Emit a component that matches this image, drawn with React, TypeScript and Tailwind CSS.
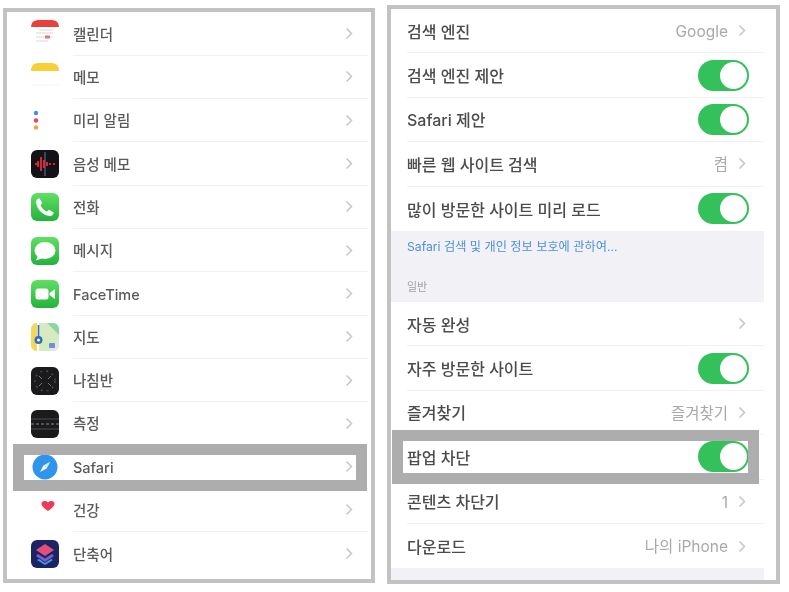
import React from "react";

const font = { fontFamily: 'Inter, "Noto Sans CJK KR", sans-serif' };

function Chevron({ className = "" }: { className?: string }) {
  return (
    <svg width="8" height="13" viewBox="0 0 8 13" fill="none" className={`blur-[0.4px] ${className}`}>
      <path d="M1.5 1.5 L6.5 6.5 L1.5 11.5" stroke="#c6c6c8" strokeWidth="1.5" />
    </svg>
  );
}

function Toggle() {
  return (
    <div className="w-[51px] h-[31px] rounded-full bg-[#34c05a] flex items-center justify-end pr-[2px] blur-[0.5px]">
      <div className="w-[27px] h-[27px] rounded-full bg-white" />
    </div>
  );
}

const Tile = ({ children, className = "" }: { children?: React.ReactNode; className?: string }) => (
  <div className={`w-[28px] h-[28px] rounded-[6px] overflow-hidden flex items-center justify-center blur-[0.6px] ${className}`}>{children}</div>
);

const icons: Record<string, React.ReactNode> = {
  calendar: (
    <Tile className="bg-white">
      <svg width="28" height="28" viewBox="0 0 28 28">
        <path d="M0 7 Q0 0 7 0 H21 Q28 0 28 7 Z" fill="#e8413c" />
        <path d="M8 10h14M5 13h17M5 17h17M5 21h12" stroke="#e6e6e6" strokeWidth="1.4" />
        <rect x="14" y="15.5" width="5" height="3" fill="#e8737a" />
      </svg>
    </Tile>
  ),
  memo: (
    <Tile className="bg-white">
      <svg width="28" height="28" viewBox="0 0 28 28">
        <path d="M0 8 Q0 0 7 0 H21 Q28 0 28 8 Z" fill="#f7d038" />
        <path d="M0 22H28" stroke="#f4f4f4" />
      </svg>
    </Tile>
  ),
  reminder: (
    <Tile className="bg-white">
      <svg width="28" height="28" viewBox="0 0 28 28">
        <circle cx="5" cy="6" r="2.2" fill="#4a90d9" />
        <circle cx="5" cy="13.5" r="2.2" fill="#e8455a" />
        <circle cx="5" cy="20.5" r="2.2" fill="#f2a33a" />
      </svg>
    </Tile>
  ),
  voice: (
    <Tile className="bg-[#141216]">
      <svg width="28" height="28" viewBox="0 0 28 28">
        <path d="M14 2V26" stroke="#5b7f9a" strokeWidth="1" />
        <path d="M4 14h3M7 11v6M10 7v14M13 10v8M16 12v4M19 13v2M22 14h2" stroke="#d3283c" strokeWidth="2" />
      </svg>
    </Tile>
  ),
  phone: (
    <Tile className="bg-gradient-to-b from-[#5fe064] to-[#21b23c]">
      <svg width="28" height="28" viewBox="0 0 24 24">
        <path d="M7.2 4.5 L9.6 8.6 L8.2 10.4 C9 12.6 11.2 15 13.6 15.8 L15.4 14.4 L19.5 16.8 C19 19 17.6 20 15.8 19.8 C10 19 5 14 4.3 8.2 C4.2 6.4 5.2 5 7.2 4.5 Z" fill="#fff" />
      </svg>
    </Tile>
  ),
  message: (
    <Tile className="bg-gradient-to-b from-[#5fe064] to-[#21b23c]">
      <svg width="28" height="28" viewBox="0 0 28 28">
        <ellipse cx="14" cy="13.5" rx="10.5" ry="8.5" fill="#fff" />
        <path d="M7 18 L5 23.5 L12 21 Z" fill="#fff" />
      </svg>
    </Tile>
  ),
  facetime: (
    <Tile className="bg-gradient-to-b from-[#5fe064] to-[#21b23c]">
      <svg width="28" height="28" viewBox="0 0 28 28">
        <rect x="4.5" y="8.5" width="13" height="11" rx="2.5" fill="#fff" />
        <path d="M18.5 13 L24 9 V19 L18.5 15 Z" fill="#fff" />
      </svg>
    </Tile>
  ),
  maps: (
    <Tile className="bg-[#d6ecc0]">
      <svg width="28" height="28" viewBox="0 0 28 28">
        <path d="M0 0H6V28H0Z" fill="#f4d85a" />
        <path d="M16 0L28 12V0Z" fill="#8fd3a4" />
        <path d="M18 28L28 16V28Z" fill="#e4e4ea" />
        <path d="M6 0 L8 0 V28 H6Z" fill="#fff" />
        <path d="M7.5 2V15" stroke="#2e6fc4" strokeWidth="1.6" />
        <circle cx="7.5" cy="17" r="4" fill="#2e6fc4" />
        <circle cx="7.5" cy="17" r="1.6" fill="#fff" />
        <rect x="18" y="20" width="6" height="5" rx="1" fill="#6d8fd6" />
      </svg>
    </Tile>
  ),
  compass: (
    <Tile className="bg-[#1a1a1c]">
      <svg width="28" height="28" viewBox="0 0 28 28">
        <circle cx="14" cy="14" r="10" fill="none" stroke="#4a4a4c" strokeWidth="1.5" strokeDasharray="2 4" />
        <path d="M8 9l3 3M20 9l-3 3M8 19l3-3M20 19l-3-3" stroke="#77777a" />
      </svg>
    </Tile>
  ),
  measure: (
    <Tile className="bg-[#1b1b1d]">
      <svg width="28" height="28" viewBox="0 0 28 28">
        <path d="M0 9H28M0 19H28" stroke="#4c4c4e" />
        <path d="M0 14H28" stroke="#8a8a8c" strokeDasharray="3 2" />
      </svg>
    </Tile>
  ),
  safari: (
    <div className="w-[28px] h-[28px] flex items-center justify-center blur-[0.6px]">
      <svg width="26" height="26" viewBox="0 0 26 26">
        <circle cx="13" cy="13" r="12.5" fill="#2f95ec" />
        <path d="M18 8 L14.5 14.5 L8 18 L11.5 11.5 Z" fill="#fff" />
        <path d="M18 8 L14.5 14.5 L11.5 11.5 Z" fill="#cfe6fb" />
      </svg>
    </div>
  ),
  health: (
    <Tile className="bg-white">
      <svg width="28" height="28" viewBox="0 0 28 28">
        <path d="M17 15 C12 11.5 10.5 9.5 10.5 7.5 C10.5 5 14.5 4 17 6.6 C19.5 4 23.5 5 23.5 7.5 C23.5 9.5 22 11.5 17 15 Z" fill="#ec3b54" />
      </svg>
    </Tile>
  ),
  shortcuts: (
    <Tile className="bg-[#1d2463]">
      <svg width="28" height="28" viewBox="0 0 28 28">
        <path d="M14 4 L23 10 L14 16 L5 10 Z" fill="#e24f7a" />
        <path d="M7 14 L14 18.5 L21 14 L23 16 L14 22 L5 16 Z" fill="#7b5cd6" />
        <path d="M8 19 L14 23 L20 19 L22 20 L14 25 L6 20 Z" fill="#3fa4d8" />
      </svg>
    </Tile>
  ),
};

const leftRows: [string, string][] = [
  ["calendar", "캘린더"],
  ["memo", "메모"],
  ["reminder", "미리 알림"],
  ["voice", "음성 메모"],
  ["phone", "전화"],
  ["message", "메시지"],
  ["facetime", "FaceTime"],
  ["maps", "지도"],
  ["compass", "나침반"],
  ["measure", "측정"],
  ["safari", "Safari"],
  ["health", "건강"],
  ["shortcuts", "단축어"],
];

function LeftRow({ icon, label, last }: { icon: string; label: string; last: boolean }) {
  return (
    <div className="h-[43.3px] flex items-center pl-[24px]">
      <div className="w-[28px] shrink-0">{icons[icon]}</div>
      <div className={`ml-[14px] flex-1 h-full flex items-center justify-between pr-[15px] ${last ? "" : "border-b border-[#f2f2f4]"}`}>
        <span className="pt-[2px] text-[14.5px] font-medium text-[#5a5a5a] blur-[0.4px]">{label}</span>
        <Chevron />
      </div>
    </div>
  );
}

type R = { label: string; value?: string; toggle?: boolean; chevron?: boolean };

function RightRow({ r, last }: { r: R; last?: boolean }) {
  return (
    <div className={`h-[44.4px] flex items-center justify-between pr-[15px] ml-[16px] ${last ? "" : "border-b border-[#f2f2f4]"}`}>
      <span className="pt-[2px] text-[16px] font-medium text-[#4c4c4c] blur-[0.4px]">{r.label}</span>
      <div className="flex items-center">
        {r.value && <span className="pt-[2px] text-[15.5px] text-[#a9a9ab] mr-[10px] blur-[0.4px]">{r.value}</span>}
        {r.chevron && <Chevron className="mr-[3px]" />}
        {r.toggle && <Toggle />}
      </div>
    </div>
  );
}

const topRows: R[] = [
  { label: "검색 엔진", value: "Google", chevron: true },
  { label: "검색 엔진 제안", toggle: true },
  { label: "Safari 제안", toggle: true },
  { label: "빠른 웹 사이트 검색", value: "켬", chevron: true },
  { label: "많이 방문한 사이트 미리 로드", toggle: true },
];
const bottomRows: R[] = [
  { label: "자동 완성", chevron: true },
  { label: "자주 방문한 사이트", toggle: true },
  { label: "즐겨찾기", value: "즐겨찾기", chevron: true },
  { label: "팝업 차단", toggle: true },
  { label: "콘텐츠 차단기", value: "1", chevron: true },
  { label: "다운로드", value: "나의 iPhone", chevron: true },
];

export default function App() {
  return (
    <div className="w-[789px] h-[592px] bg-white relative overflow-hidden flex items-start pl-[3px] pt-[5px]" style={font}>
      {/* left panel */}
      <div className="mt-[3px] w-[372px] h-[575px] border-[4px] border-[#c2c2c2] bg-white pt-[0.5px] pr-[3px]">
        {leftRows.map(([icon, label], i) => (
          <LeftRow key={label} icon={icon} label={label} last={i === leftRows.length - 1} />
        ))}
      </div>

      {/* right panel */}
      <div className="ml-[12px] w-[393px] h-[579px] border-[4px] border-[#c2c2c2] bg-white pr-[12px] flex flex-col">
        {topRows.map((r, i) => (
          <RightRow key={r.label} r={r} last={i === topRows.length - 1} />
        ))}
        <div className="h-[71px] bg-[#f2f2f6] pl-[16px] pt-[8px] shrink-0">
          <div className="text-[12.2px] leading-[16px] text-[#4a90dc] blur-[0.4px]">Safari 검색 및 개인 정보 보호에 관하여...</div>
          <div className="mt-[24px] text-[11px] leading-[16px] text-[#a0a0a4] blur-[0.4px]">일반</div>
        </div>
        {bottomRows.map((r, i) => (
          <RightRow key={r.label} r={r} last={i === bottomRows.length - 1} />
        ))}
        <div className="flex-1 bg-[#f2f2f6]" />
      </div>

      {/* highlight frames lying over the rows */}
      <div className="absolute left-[13px] top-[444px] w-[354px] h-[47px] border-[11px] border-[#adadad]" />
      <div className="absolute left-[392px] top-[430px] w-[367px] h-[54px] border-[11px] border-[#adadad]" />
    </div>
  );
}
